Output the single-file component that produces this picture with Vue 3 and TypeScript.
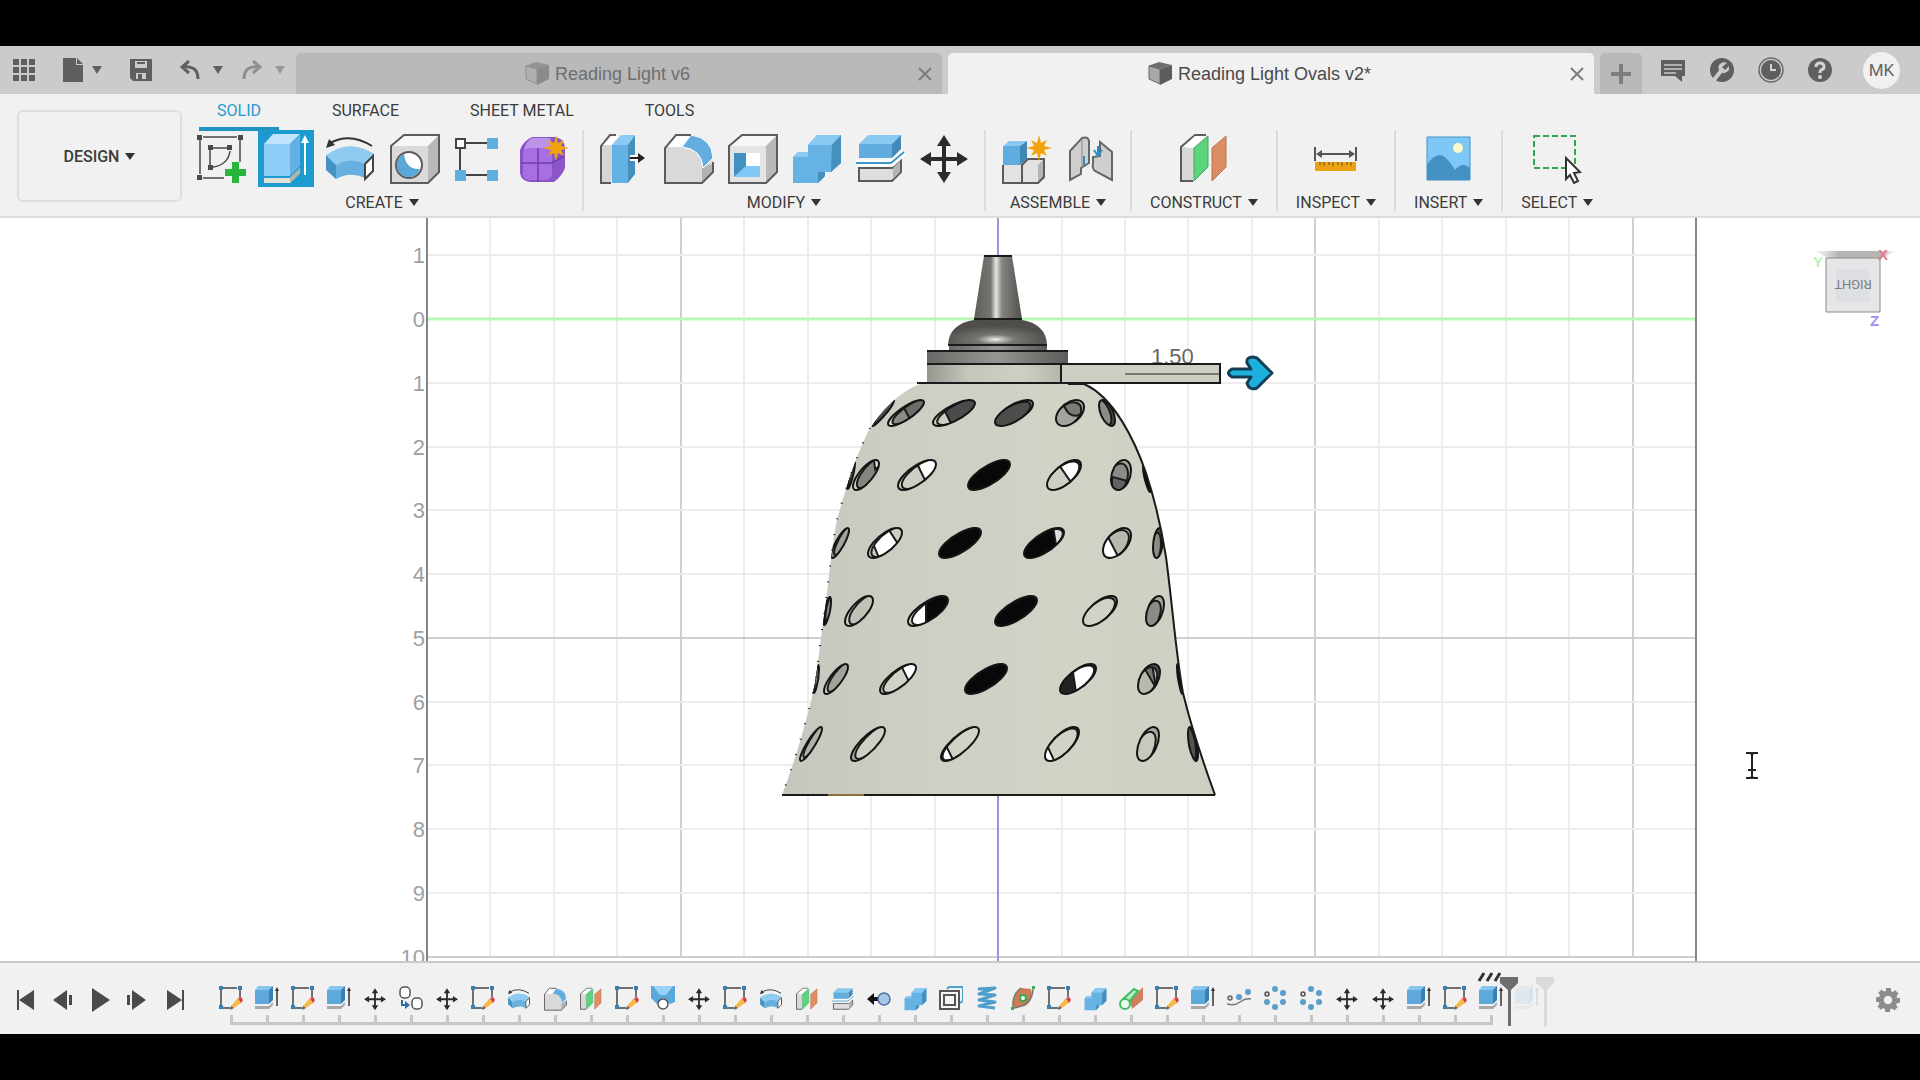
<script setup lang="ts">
interface Hole {
  cx: number
  cy: number
  w: number
  h: number
  rho: number
  rim: string
  fill: string
  off: number
  patch?: string
  patchFill?: string
}

interface Tool {
  icon: string
  name: string
  active?: boolean
}

interface ToolGroup {
  label: string
  tools: Tool[]
}

const ribbonTabs = ['SOLID', 'SURFACE', 'SHEET METAL', 'TOOLS']

const groups: ToolGroup[] = [
  {
    label: 'CREATE',
    tools: [
      { icon: 'sketch', name: 'Create Sketch' },
      { icon: 'extrude', name: 'Extrude', active: true },
      { icon: 'revolve', name: 'Revolve' },
      { icon: 'hole', name: 'Hole' },
      { icon: 'pattern', name: 'Rectangular Pattern' },
      { icon: 'form', name: 'Create Form' }
    ]
  },
  {
    label: 'MODIFY',
    tools: [
      { icon: 'press', name: 'Press Pull' },
      { icon: 'fillet', name: 'Fillet' },
      { icon: 'shell', name: 'Shell' },
      { icon: 'combine', name: 'Combine' },
      { icon: 'split', name: 'Split Body' },
      { icon: 'move', name: 'Move/Copy' }
    ]
  },
  {
    label: 'ASSEMBLE',
    tools: [
      { icon: 'component', name: 'New Component' },
      { icon: 'joint', name: 'Joint' }
    ]
  },
  { label: 'CONSTRUCT', tools: [{ icon: 'plane', name: 'Offset Plane' }] },
  { label: 'INSPECT', tools: [{ icon: 'measure', name: 'Measure' }] },
  { label: 'INSERT', tools: [{ icon: 'picture', name: 'Insert Canvas' }] },
  { label: 'SELECT', tools: [{ icon: 'select', name: 'Select' }] }
]

const playback = [
  { name: 'Go to start', d: 'M11 10h2v20h-2zM28 10v20l-15 -10z' },
  { name: 'Step back', d: 'M23 10v20l-14 -10zM25 15h3v10h-3z' },
  { name: 'Play', d: 'M10 8v24l18 -12z' },
  { name: 'Step forward', d: 'M12 10v20l14 -10zM7 15h3v10h-3z' },
  { name: 'Go to end', d: 'M24 10h2v20h-2zM9 10v20l15 -10z' }
]

const features: string[] = [
  't-sketch', 't-extrude', 't-sketch', 't-extrude', 'move', 't-copy', 'move', 't-sketch',
  'revolve', 'fillet', 'plane', 't-sketch', 't-loft', 'move', 't-sketch', 'revolve',
  'plane', 'split', 't-remove', 'combine', 't-offset', 't-coil', 't-patch', 't-sketch',
  'combine', 't-pipe', 't-sketch', 't-extrude', 't-path', 't-circular', 't-circular',
  'move', 'move', 't-extrude', 't-sketch', 't-extrude'
]

const LEFT = 427
const TOP = 319
const STEP_X = 63.45
const STEP_Y = 63.75

const columns = Array.from({ length: 19 }, (_, i) => i + 1).map((i) => ({
  x: Math.round(LEFT + i * STEP_X),
  major: i % 5 === 4
}))
const rows = Array.from({ length: 12 }, (_, i) => i - 1).map((i) => ({
  n: Math.abs(i),
  y: Math.round(TOP + i * STEP_Y),
  major: i === 5 || i === 10,
  zero: i === 0
}))

const BLACK = '#080808'
const DARK = '#4b4b4a'
const MID = '#8c8b86'
const PALE = '#cfcec5'
const RIM = '#a9a89f'
const WHITE = '#ffffff'

const hole = (
  cx: number, cy: number, w: number, h: number, rho: number,
  rim: string, fill: string, off: number, patch?: string, patchFill?: string
): Hole => ({ cx, cy, w, h, rho, rim, fill, off, patch, patchFill })

const holes: Hole[] = [
  hole(883, 413, 11, 13, 0.95, RIM, DARK, 0.2),
  hole(906, 413, 18, 13, 0.82, PALE, MID, 0.25, 'M-0.4 -1.2H1.2V1.2H0z', '#6c6b68'),
  hole(954, 413, 21, 13, 0.75, PALE, DARK, 0.2, 'M-1.2 -1.2H-0.7L-0.3 1.2H-1.2z', PALE),
  hole(1014, 413, 19, 13, 0.7, RIM, '#4e4d4c', -0.12),
  hole(1070, 413, 14, 13, 0.45, RIM, '#a3a29b', -0.2, 'M-0.3 -1.2H1.2V1.2L0.9 0.4Q0.1 0.4 -0.3 -1.2z', '#7b7a75'),
  hole(1107, 413, 8, 13, -0.55, DARK, MID, -0.45),

  hole(851, 475, 4, 14, 0.85, BLACK, DARK, 0.3),
  hole(866, 475, 13, 15, 0.75, PALE, '#85847e', 0.3, 'M0.3 -1.2H1.2V0.1H0.4z', '#dedddb'),
  hole(917, 475, 19, 15, 0.72, PALE, PALE, 0.2, 'M-0.2 -1.2H1.2V1.2H0.3z', WHITE),
  hole(989, 475, 21, 15, 0.72, BLACK, BLACK, 0),
  hole(1064, 475, 17, 15, 0.65, DARK, PALE, -0.1, 'M-0.2 -1.2H1.2V1.2H0.6z', WHITE),
  hole(1121, 475, 10, 15, 0.3, RIM, MID, -0.3, 'M-0.6 -0.3L0.8 0.4V1.2H-0.6z', '#62615e'),
  hole(1147, 478, 4, 14, -0.8, BLACK, BLACK, 0),

  hole(840, 543, 9, 15, 0.85, MID, '#a3a29b', 0.35),
  hole(885, 543, 17, 15, 0.7, PALE, PALE, 0.2, 'M-1 -1.2H0L0.7 1.2H-0.5z', WHITE),
  hole(960, 543, 21, 15, 0.72, BLACK, BLACK, 0),
  hole(1044, 543, 20, 15, 0.7, BLACK, BLACK, -0.06, 'M0.5 -1.2H1.2V1.2H0.7z', '#dedddb'),
  hole(1117, 543, 14, 15, 0.5, PALE, '#b9b8af', -0.15, 'M-1.2 -1.2H-0.6L0.3 1.2H-1.2z', WHITE),
  hole(1158, 543, 5, 15, 0.3, DARK, MID, -0.4),

  hole(827, 611, 4, 14, 0.7, BLACK, MID, 0.6),
  hole(859, 611, 14, 15, 0.7, PALE, '#c2c1b8', 0.3),
  hole(928, 611, 20, 15, 0.72, PALE, WHITE, 0.2, 'M-0.3 -1.2H1.2V1.2H-0.3z', BLACK),
  hole(1016, 611, 21, 15, 0.72, BLACK, BLACK, 0),
  hole(1100, 611, 17, 15, 0.65, RIM, '#d3d2c8', -0.12),
  hole(1155, 611, 9, 15, 0.45, RIM, MID, -0.35),

  hole(816, 679, 3, 14, 0.7, BLACK, MID, 0.5),
  hole(836, 679, 12, 15, 0.8, PALE, '#a3a29b', 0.3),
  hole(898, 679, 18, 15, 0.75, PALE, '#d3d2c8', 0.18, 'M0 -1.2H1.2V1.2H0.5z', WHITE),
  hole(986, 679, 21, 15, 0.72, BLACK, BLACK, 0),
  hole(1078, 679, 18, 15, 0.7, DARK, WHITE, -0.1, 'M-1.2 -1.2H-0.2L0 1.2H-1.2z', '#222222'),
  hole(1149, 679, 11, 15, 0.45, DARK, '#b9b8af', -0.25, 'M-0.2 -1.2H0.5L0.9 0.9z', '#777671'),
  hole(1180, 679, 3, 15, -0.8, BLACK, BLACK, 0),

  hole(811, 744, 11, 17, 0.9, PALE, '#b1b0a7', 0.3),
  hole(868, 744, 17, 17, 0.8, RIM, '#d0cfc5', 0.25),
  hole(960, 744, 19, 17, 0.78, DARK, '#d3d2c8', 0.08, 'M-1.2 -1.2H-0.9L-0.4 1.2H-1.2z', WHITE),
  hole(1062, 744, 17, 17, 0.7, DARK, '#d3d2c8', -0.08, 'M-1.2 -1.2H-0.9L-0.3 1.2H-1.2z', WHITE),
  hole(1148, 744, 11, 17, 0.5, RIM, '#c9c8be', -0.3),
  hole(1193, 744, 5, 17, -0.6, BLACK, '#55544f', -0.4)
]

// Maps the unit circle onto a slanted ellipse that fills a w by h half-extent box.
const holeMatrix = (h: Hole): string => {
  const s = Math.sqrt(1 - h.rho * h.rho)
  return `matrix(${h.w} ${(-h.h * h.rho).toFixed(3)} 0 ${(h.h * s).toFixed(3)} ${h.cx} ${h.cy})`
}

const wallShift = (h: Hole): string => `translate(${h.off} ${Math.abs(h.off) / 2})`

const BELL =
  'M920 384C900 391 880 412 868 432C855 458 842 500 836 524C830 560 828 590 823 623C819 650 818 666 815 683C808 718 793 767 782 795H1215C1203 762 1189 718 1183 693C1176 655 1173 610 1166 557C1160 520 1154 497 1146 473C1135 441 1114 397 1084 384Z'
const BELL_RIGHT = 'M1068 384H1084C1114 397 1135 441 1146 473C1154 497 1160 520 1166 557C1173 610 1176 655 1183 693C1189 718 1203 762 1215 795'
const BELL_LEFT = 'M870 428C855 458 842 500 836 524C830 560 828 590 823 623C819 650 818 666 815 683C808 718 793 767 782 795'
</script>

<template>
  <div class="screen">
    <svg class="sprite" aria-hidden="true">
      <defs>
        <path id="star" d="M0 -13L2 -5L8 -8L5 -2L13 0L5 2L8 8L2 5L0 13L-2 5L-8 8L-5 2L-13 0L-5 -2L-8 -8L-2 -5Z" fill="#f2a20c" />

        <symbol id="sketch" viewBox="0 0 56 57">
          <path d="M9 7H43M6 10V44M9 48H30M46 10V32M19 18H33M16 20V35M36 21Q34 35 19 37" fill="none" stroke="#4a4a4a" stroke-width="1.500" />
          <path d="M3 5h5v5h-5zM44 5h5v5h-5zM3 45h5v5h-5zM14 15h5v5h-5zM33 15h5v5h-5zM14 35h5v5h-5z" fill="#4a4a4a" />
          <path d="M38 32h7v7h7v7h-7v7h-7v-7h-7v-7h7z" fill="#27b53c" />
        </symbol>
        <symbol id="extrude" viewBox="0 0 56 57">
          <path d="M6 48H32L42 38V43L32 53H6Z" fill="#e3e0d5" />
          <path d="M32 48L42 38V43L32 53Z" fill="#b5b2a6" />
          <path d="M6 14L15 4H42L32 14Z" fill="#bfe4fb" />
          <path d="M6 14H32V46H6Z" fill="#8dcdf7" />
          <path d="M32 14L42 4V36L32 46Z" fill="#64b0e2" />
          <path d="M47 11V45" stroke="#fff" stroke-width="2" />
          <path d="M47 5L51 13H43Z" fill="#fff" />
        </symbol>
        <symbol id="revolve" viewBox="0 0 56 57">
          <path d="M8 13Q28 2 50 16" fill="none" stroke="#333" stroke-width="2" />
          <path d="M4 18L7 9L13 15Z" fill="#333" />
          <path d="M4 25Q28 8 52 24L43 34Q28 26 14 35Z" fill="#8fcbf1" />
          <path d="M14 35Q28 26 43 34V48Q28 41 14 49Z" fill="#68b0df" />
          <path d="M4 25L14 35V49L4 40Z" fill="#4694c6" />
          <path d="M43 34L51 26V41L43 49Z" fill="#fff" stroke="#444" stroke-width="2" />
        </symbol>
        <symbol id="hole" viewBox="0 0 56 57">
          <path d="M5 16L18 5H53L42 16Z" fill="#f6f6f6" />
          <path d="M42 16L53 5V42L42 53Z" fill="#b9b9b9" />
          <path d="M5 16H42V53H5Z" fill="#dadada" />
          <path d="M5 16L18 5H53V42L42 53H5Z" fill="none" stroke="#5b5b5b" stroke-width="2" />
          <circle cx="23" cy="35" r="13" fill="#fff" stroke="#5b5b5b" stroke-width="2" />
          <path d="M18 24A12 12 0 1 0 34 39Q20 40 18 24Z" fill="#5ba8d8" />
        </symbol>
        <symbol id="pattern" viewBox="0 0 56 57">
          <path d="M16 13H37M16 45H37M10 19V40" stroke="#444" stroke-width="2" />
          <path d="M6 9h9v9h-9z" fill="#fff" stroke="#444" stroke-width="2" />
          <path d="M37 8h11v11h-11zM5 40h11v11h-11zM37 40h11v11h-11z" fill="#5faee0" />
        </symbol>
        <symbol id="form" viewBox="0 0 56 57">
          <path d="M18 7H40Q51 8 51 20V38Q48 46 40 52H16Q7 51 6 43V20Q9 11 18 7Z" fill="#8a55c9" />
          <path d="M18 8H36L40 20H10Q12 11 18 8Z" fill="#bb93e8" />
          <rect x="9" y="18" width="29" height="32" rx="6" fill="#a86fe3" />
          <path d="M24 18V52M7 33H38L50 26" fill="none" stroke="#6f3db0" stroke-width="1.500" />
          <use href="#star" x="42" y="18" />
        </symbol>
        <symbol id="press" viewBox="0 0 56 57">
          <path d="M15 53H5V16L14 5H20" fill="#d6d6d6" stroke="#5b5b5b" stroke-width="2" />
          <path d="M7 15L15 6H22L16 15Z" fill="#fff" />
          <path d="M16 15H32V53H16Z" fill="#64b2e4" />
          <path d="M16 15L25 5H39L32 15Z" fill="#8bcbf3" />
          <path d="M32 15L39 5V44L32 53Z" fill="#458fbd" />
          <path d="M34 28H44" stroke="#fff" stroke-width="6" />
          <path d="M34 28H44" stroke="#222" stroke-width="2" />
          <path d="M42 23L49 28L42 33Z" fill="#222" />
        </symbol>
        <symbol id="fillet" viewBox="0 0 56 57">
          <path d="M5 53V18L16 5H31Q50 8 53 32V42L42 53Z" fill="#d9d9d9" />
          <path d="M6 17L16 6H31L22 17Z" fill="#fff" />
          <path d="M42 38L52 34V42L42 52Z" fill="#b2b2b2" />
          <path d="M22 17L31 5Q52 8 53 28L43 38Q42 19 22 17Z" fill="#63ade0" stroke="#fff" />
          <path d="M31 5H16L5 18V53H42L53 42V32" fill="none" stroke="#5b5b5b" stroke-width="2" />
        </symbol>
        <symbol id="shell" viewBox="0 0 56 57">
          <path d="M5 16L18 5H53L42 16Z" fill="#f6f6f6" />
          <path d="M42 16L53 5V42L42 53Z" fill="#b9b9b9" />
          <path d="M5 16H42V53H5Z" fill="#e4e4e4" />
          <path d="M5 16L18 5H53V42L42 53H5Z" fill="none" stroke="#5b5b5b" stroke-width="2" />
          <path d="M10 23H36V47H10Z" fill="#fff" />
          <path d="M10 23H22V37L10 47Z" fill="#4391c0" />
          <path d="M10 47L22 36H36V47Z" fill="#81c8f5" />
        </symbol>
        <symbol id="combine" viewBox="0 0 56 57">
          <path d="M5 27L10 22H20V15L29 5H53V33L43 42H37V46L30 53H5Z" fill="#66b2e3" />
          <path d="M20 15L29 5H53L44 15Z" fill="#8acaf2" />
          <path d="M5 27L10 22H20V27Z" fill="#8acaf2" />
          <path d="M44 15L53 5V33L43 42ZM37 42V46L30 53V42Z" fill="#468fbe" />
        </symbol>
        <symbol id="split" viewBox="0 0 56 57">
          <path d="M7 14L16 5H49L40 14Z" fill="#8acaf2" />
          <path d="M7 14H40V28H7Z" fill="#62ade0" />
          <path d="M40 14L49 5V19L40 28Z" fill="#438ab9" />
          <path d="M7 38H40L49 30V42L40 51H7Z" fill="#dedede" stroke="#5b5b5b" stroke-width="2" />
          <path d="M41 38L48 31V42L41 49Z" fill="#b3b3b3" />
          <path d="M4 33H40L52 22" fill="none" stroke="#fff" stroke-width="7" />
          <path d="M4 33H39L52 22" fill="none" stroke="#3e97ca" stroke-width="2" />
        </symbol>
        <symbol id="move" viewBox="0 0 56 57">
          <path d="M28 11V47M10 29H46" stroke="#2b2b2b" stroke-width="4" />
          <path d="M28 5L35 16H21ZM28 53L35 42H21ZM4 29L15 22V36ZM52 29L41 22V36Z" fill="#2b2b2b" />
        </symbol>
        <symbol id="component" viewBox="0 0 56 57">
          <path d="M5 35H24V53H5ZM24 35L30 29H46L40 35ZM24 35H40V53H24Z" fill="#e2e2e2" />
          <path d="M40 35L46 29V47L40 53Z" fill="#b5b5b5" />
          <path d="M5 35V53H40L46 47V29H30L24 35V53" fill="none" stroke="#5b5b5b" stroke-width="2" />
          <path d="M5 16H22V35H5Z" fill="#5fade0" />
          <path d="M5 16L11 11H29L22 16Z" fill="#8acaf2" />
          <path d="M22 16L29 11V29L22 35Z" fill="#3f87b5" />
          <use href="#star" x="41" y="18" />
        </symbol>
        <symbol id="joint" viewBox="0 0 56 57">
          <path d="M8 21L20 8Q26 6 27 11V33L19 38V44L8 50Z" fill="#cfcfcf" stroke="#666" stroke-width="2" />
          <path d="M20 9V38" stroke="#888" />
          <path d="M38 12L50 22V50L33 41Q30 39 31 33V27L38 26Z" fill="#cfcfcf" stroke="#666" stroke-width="2" />
          <path d="M22 35V26M36 16V25M32 20L36 26L40 20" fill="none" stroke="#2f8fc4" stroke-width="2" />
        </symbol>
        <symbol id="plane" viewBox="0 0 56 57">
          <path d="M17 51H5V17L19 5H30" fill="#d8d8d8" stroke="#5b5b5b" stroke-width="2" />
          <path d="M7 17L19 6H30L18 18Z" fill="#fff" />
          <path d="M18 18L32 6V37L18 51Z" fill="#5bd47c" stroke="#43a960" />
          <path d="M36 18L50 6V37L36 51Z" fill="#dd8d62" stroke="#b97350" />
        </symbol>
        <symbol id="measure" viewBox="0 0 56 57">
          <path d="M7 17V31M48 17V31" stroke="#555" stroke-width="2" />
          <path d="M11 24H44" stroke="#555" stroke-width="2" />
          <path d="M8 24L14 20V28ZM47 24L41 20V28Z" fill="#555" />
          <path d="M7 32H48V41H7Z" fill="#eda211" />
          <path d="M12 32V35M16 32V36M21 32V35M25 32V36M30 32V35M34 32V36M39 32V35M43 32V36" stroke="#6b4d13" />
        </symbol>
        <symbol id="picture" viewBox="0 0 56 57">
          <path d="M6 7H49V50H6Z" fill="#7ec8f8" />
          <circle cx="37" cy="18" r="5" fill="#fdf9cb" />
          <path d="M6 35Q12 25 19 25Q26 26 34 40Q41 31 49 38V50H6Z" fill="#4492c5" />
          <path d="M6 7H49V50H6Z" fill="none" stroke="#4492c5" />
        </symbol>
        <symbol id="select" viewBox="0 0 56 57">
          <path d="M5 6H46V38H5Z" fill="none" stroke="#32a650" stroke-width="2" stroke-dasharray="6 3" />
          <path d="M37 28L51 42L45 43L49 51L45 53L41 45L37 49Z" fill="#fff" stroke="#333" stroke-width="2" />
        </symbol>

        <symbol id="t-sketch" viewBox="0 0 24 24">
          <path d="M4 2H18M2 4V20M4 22H11M21 4V11" fill="none" stroke="#444" stroke-width="1.500" />
          <path d="M0 0h4v4h-4zM19 0h4v4h-4zM0 19h4v4h-4z" fill="#3a7fb0" />
          <path d="M12 20L19 12L23 16L15 22Z" fill="#f6b847" />
          <path d="M19 12L22 11L24 14L22 17Z" fill="#dd3947" />
          <path d="M12 20L11 24L15 22Z" fill="#555" />
        </symbol>
        <symbol id="t-extrude" viewBox="0 0 24 24">
          <path d="M0 20H14L18 16V19L14 23H0Z" fill="#a9a9a9" />
          <path d="M0 4L3 0H18L15 4Z" fill="#86c5ee" />
          <path d="M0 4H14V18H0Z" fill="#5ea9dc" />
          <path d="M14 4L18 0V14L14 18Z" fill="#3c7fae" />
          <path d="M22 4V20" stroke="#333" stroke-width="1.500" />
          <path d="M22 1L24 5H20Z" fill="#333" />
        </symbol>
        <symbol id="t-copy" viewBox="0 0 24 24">
          <rect x="1" y="1" width="10" height="11" rx="4" fill="#fff" stroke="#555" stroke-width="1.500" />
          <rect x="13" y="12" width="10" height="11" rx="4" fill="#fff" stroke="#555" stroke-width="1.500" />
          <path d="M3 14V19H7" fill="none" stroke="#2c6ea6" stroke-width="2" />
          <path d="M6 15L11 19L6 23Z" fill="#2c6ea6" />
        </symbol>
        <symbol id="t-loft" viewBox="0 0 24 24">
          <path d="M0 0H24V16L19 18L12 12L6 18L0 12Z" fill="#5ba9db" />
          <path d="M2 0H22L15 9H9Z" fill="#98d3f7" />
          <circle cx="12" cy="18" r="5" fill="#fff" stroke="#555" stroke-width="1.500" />
        </symbol>
        <symbol id="t-remove" viewBox="0 0 24 24">
          <path d="M0 13L7 7V11H12V15H7V19Z" fill="#111" />
          <circle cx="17" cy="13" r="6" fill="#a5c6e6" stroke="#4f6f9e" stroke-width="1.500" />
        </symbol>
        <symbol id="t-offset" viewBox="0 0 24 24">
          <path d="M8 3L10 1H24V15L21 17" fill="none" stroke="#4f9fc8" stroke-width="2" />
          <path d="M1 5H20V23H1Z" fill="#f5f5f5" stroke="#555" stroke-width="2" />
          <path d="M5 9H16V19H5Z" fill="none" stroke="#555" stroke-width="2" />
        </symbol>
        <symbol id="t-coil" viewBox="0 0 24 24">
          <path d="M3 3L20 2L4 8L20 9L4 14L20 16L4 20L20 22" fill="none" stroke="#4f9dcb" stroke-width="3" stroke-linejoin="round" />
        </symbol>
        <symbol id="t-patch" viewBox="0 0 24 24">
          <path d="M2 22Q1 8 10 2L20 3Q23 14 14 20Z" fill="#cc7c55" />
          <path d="M2 22Q1 8 10 2M2 22Q22 20 22 2" fill="none" stroke="#777" stroke-width="1.500" />
          <circle cx="12" cy="12" r="3" fill="#fff" stroke="#35a94e" stroke-width="2" />
          <path d="M0 21h3v3h-3zM21 0h3v3h-3z" fill="#31b64a" />
        </symbol>
        <symbol id="t-pipe" viewBox="0 0 24 24">
          <path d="M11 14L24 1V14L13 23Z" fill="#ce805c" />
          <path d="M3 14L15 3L19 5L10 16" fill="#bfe8c8" stroke="#3fbf62" stroke-width="2" />
          <circle cx="6" cy="18" r="5" fill="#eefaf0" stroke="#3fbf62" stroke-width="2" />
        </symbol>
        <symbol id="t-path" viewBox="0 0 24 24">
          <circle cx="3" cy="12" r="2" fill="#ddd" stroke="#666" stroke-width="1.500" />
          <circle cx="12" cy="11" r="3" fill="#5a9ecb" />
          <circle cx="21" cy="6" r="3" fill="#5a9ecb" />
          <path d="M0 18Q8 20 13 16T24 13" fill="none" stroke="#777" stroke-width="1.500" />
        </symbol>
        <symbol id="t-circular" viewBox="0 0 24 24">
          <circle cx="4" cy="8" r="2" fill="#ddd" stroke="#555" stroke-width="1.500" />
          <g fill="#5a9ecb">
            <circle cx="12" cy="3" r="3" /><circle cx="20" cy="7" r="3" /><circle cx="20" cy="16" r="3" />
            <circle cx="12" cy="21" r="3" /><circle cx="4" cy="16" r="3" />
          </g>
        </symbol>
        <symbol id="cube" viewBox="0 0 24 24">
          <path d="M0 4L11 0L24 3L12 7Z" fill="#6f6f6f" />
          <path d="M1 4L12 7V22L1 17Z" fill="#a9a9a9" stroke="#666" />
          <path d="M12 7L24 3V17L12 23Z" fill="#5c5c5c" />
        </symbol>
      </defs>
    </svg>

    <header class="titlebar">
      <div class="quick">
        <button class="qa" aria-label="Data panel">
          <svg width="22" height="22" viewBox="0 0 22 22"><path d="M0 0h6v6h-6zM8 0h6v6h-6zM16 0h6v6h-6zM0 8h6v6h-6zM8 8h6v6h-6zM16 8h6v6h-6zM0 16h6v6h-6zM8 16h6v6h-6zM16 16h6v6h-6z" fill="#5f5f5f" /></svg>
        </button>
        <button class="qa" aria-label="File">
          <svg width="20" height="24" viewBox="0 0 20 24"><path d="M0 0H13V7H20V24H0ZM14 0L20 6H14Z" fill="#5f5f5f" /></svg>
          <span class="caret"></span>
        </button>
        <button class="qa" aria-label="Save">
          <svg width="22" height="22" viewBox="0 0 22 22"><path d="M0 0H22V22H3L0 19Z" fill="#5f5f5f" /><path d="M5 2H17V9H5ZM6 14H16V20H6Z" fill="#cbcbcb" /><path d="M7 3H15V5H7ZM8 15H12V20H8Z" fill="#5f5f5f" /></svg>
        </button>
        <button class="qa undo-btn" aria-label="Undo">
          <svg width="20" height="20" viewBox="0 0 20 20"><path d="M9 1L2 7L9 13M3 7Q18 5 18 19" fill="none" stroke="#5f5f5f" stroke-width="3" /></svg>
          <span class="caret"></span>
        </button>
        <button class="qa redo-btn" aria-label="Redo">
          <svg width="20" height="20" viewBox="0 0 20 20"><path d="M11 1L18 7L11 13M17 7Q2 5 2 19" fill="none" stroke="#8f8f8f" stroke-width="3" /></svg>
          <span class="caret pale"></span>
        </button>
      </div>

      <div class="doc-tab idle">
        <button class="doc-name"><svg class="cube"><use href="#cube" /></svg>Reading Light v6</button>
        <button class="close" aria-label="Close Reading Light v6">
          <svg width="14" height="14" viewBox="0 0 14 14"><path d="M1 1L13 13M13 1L1 13" stroke="#7c7c7c" stroke-width="2" /></svg>
        </button>
      </div>
      <div class="doc-tab current">
        <button class="doc-name"><svg class="cube"><use href="#cube" /></svg>Reading Light Ovals v2*</button>
        <button class="close" aria-label="Close Reading Light Ovals v2">
          <svg width="14" height="14" viewBox="0 0 14 14"><path d="M1 1L13 13M13 1L1 13" stroke="#7c7c7c" stroke-width="2" /></svg>
        </button>
      </div>
      <button class="new-tab" aria-label="New design">
        <svg width="20" height="20" viewBox="0 0 20 20"><path d="M10 0V20M0 10H20" stroke="#7d7d7d" stroke-width="4" /></svg>
      </button>

      <div class="account">
        <button class="qa" aria-label="Notifications">
          <svg width="26" height="26" viewBox="0 0 26 26"><path d="M1 3H25V19H22V25L15 19H1Z" fill="#5f5f5f" /><path d="M4 8H22M4 12H22M4 16H16" stroke="#cbcbcb" stroke-width="1.500" /></svg>
        </button>
        <button class="qa" aria-label="Extensions">
          <svg width="26" height="26" viewBox="0 0 26 26"><circle cx="13" cy="13" r="12" fill="#5f5f5f" /><path d="M4 24L12 14" stroke="#cbcbcb" stroke-width="4" /><path d="M18 6Q13 4 10 8Q8 12 12 15Q16 18 20 13L20 9L16 13L13 10Z" fill="#cbcbcb" /></svg>
        </button>
        <button class="qa" aria-label="Job status">
          <svg width="26" height="26" viewBox="0 0 26 26"><circle cx="13" cy="13" r="12" fill="none" stroke="#6a6a6a" stroke-width="1.500" /><circle cx="13" cy="13" r="10" fill="#5f5f5f" /><path d="M13 7V13H18" fill="none" stroke="#d5d5d5" stroke-width="2" /></svg>
        </button>
        <button class="qa" aria-label="Help">
          <svg width="26" height="26" viewBox="0 0 26 26"><circle cx="13" cy="13" r="12" fill="#5f5f5f" /><path d="M9 10Q9 6 13 6Q17 6 17 10Q17 12 14 13Q13 14 13 16" fill="none" stroke="#d5d5d5" stroke-width="3" /><circle cx="13" cy="20" r="2" fill="#d5d5d5" /></svg>
        </button>
        <button class="avatar">MK</button>
      </div>
    </header>

    <section class="ribbon">
      <button class="workspace">DESIGN<span class="caret small"></span></button>
      <div class="ribbon-main">
        <nav class="ribbon-tabs">
          <button v-for="(tab, i) in ribbonTabs" :key="tab" :class="['ribbon-tab', { on: i === 0 }]">{{ tab }}</button>
        </nav>
        <div class="groups">
          <div v-for="g in groups" :key="g.label" :class="['group', { multi: g.tools.length > 1 }]">
            <div class="tools">
              <button v-for="t in g.tools" :key="t.name" :class="['tool', { active: t.active }]" :aria-label="t.name">
                <svg width="56" height="57"><use :href="'#' + t.icon" /></svg>
              </button>
            </div>
            <button class="group-label">{{ g.label }}<span class="caret small"></span></button>
          </div>
        </div>
      </div>
    </section>

    <main class="viewport">
      <svg class="scene" viewBox="0 218 1920 743" preserveAspectRatio="xMidYMin slice">
        <defs>
          <linearGradient id="bell" x1="0" x2="1" y1="0" y2="0">
            <stop offset="0" stop-color="#c7c6be" />
            <stop offset="0.3" stop-color="#cfcec4" />
            <stop offset="0.65" stop-color="#d3d2c7" />
            <stop offset="1" stop-color="#cfcec3" />
          </linearGradient>
          <linearGradient id="cone" x1="0" x2="1" y1="0" y2="0">
            <stop offset="0" stop-color="#5d5c59" />
            <stop offset="0.35" stop-color="#777672" />
            <stop offset="0.46" stop-color="#e6e6e4" />
            <stop offset="0.58" stop-color="#858480" />
            <stop offset="1" stop-color="#50504d" />
          </linearGradient>
          <linearGradient id="flange" x1="0" x2="1" y1="0" y2="0">
            <stop offset="0" stop-color="#6a6967" />
            <stop offset="0.5" stop-color="#979693" />
            <stop offset="1" stop-color="#5c5b59" />
          </linearGradient>
          <linearGradient id="ring" x1="0" x2="1" y1="0" y2="0">
            <stop offset="0" stop-color="#96958e" />
            <stop offset="0.3" stop-color="#c6c5bc" />
            <stop offset="0.7" stop-color="#d0cfc5" />
            <stop offset="1" stop-color="#b7b6ad" />
          </linearGradient>
          <radialGradient id="dome" cx="0.48" cy="0.78" r="0.55">
            <stop offset="0" stop-color="#f4f4f4" />
            <stop offset="0.12" stop-color="#c2c2c0" />
            <stop offset="0.35" stop-color="#777673" />
            <stop offset="1" stop-color="#4f4e4b" />
          </radialGradient>
          <linearGradient id="cube-shade" x1="0" x2="1" y1="0" y2="0">
            <stop offset="0" stop-color="#fff" />
            <stop offset="0.3" stop-color="#b5b5b5" />
            <stop offset="0.8" stop-color="#b5b5b5" />
            <stop offset="1" stop-color="#fff" />
          </linearGradient>
          <clipPath id="bell-clip"><path :d="BELL" /></clipPath>
          <clipPath id="unit"><circle r="1" /></clipPath>
        </defs>

        <g class="grid-lines">
          <line v-for="c in columns" :key="'c' + c.x" :x1="c.x" :x2="c.x" y1="218" y2="957" :class="{ major: c.major }" />
          <line v-for="r in rows" :key="'r' + r.y" :x1="427" x2="1696" :y1="r.y" :y2="r.y" :class="{ major: r.major, zero: r.zero }" />
          <line class="edge" x1="427" x2="427" y1="218" y2="961" />
          <line class="edge" x1="1696" x2="1696" y1="218" y2="961" />
          <line class="axis" x1="998" x2="998" y1="218" y2="961" />
        </g>
        <text v-for="r in rows" :key="'t' + r.y" class="ruler" x="425" :y="r.y + 8">{{ r.n }}</text>

        <text class="dimension" x="1151" y="364">1.50</text>

        <path :d="BELL" fill="url(#bell)" />
        <g clip-path="url(#bell-clip)">
          <g v-for="(h, i) in holes" :key="i" :transform="holeMatrix(h)">
            <g clip-path="url(#unit)">
              <circle r="1" :fill="h.rim" />
              <g :transform="wallShift(h)">
                <circle r="1" :fill="h.fill" />
                <g v-if="h.patch" clip-path="url(#unit)">
                  <path class="wall" :d="h.patch" :fill="h.patchFill" />
                </g>
                <circle class="wall" r="1" fill="none" />
              </g>
            </g>
            <circle class="rim" r="1" />
          </g>
        </g>
        <path :d="BELL_RIGHT" class="outline" />
        <path :d="BELL_LEFT" class="outline faint" />
        <path d="M782 795H1215" class="outline" />
        <path d="M828 795H864" stroke="#8d6d35" stroke-width="2" />

        <path d="M984 256H1012L1022 319H974Z" fill="url(#cone)" />
        <path d="M984 256H1012M974 319H1022" class="outline" />
        <path d="M974 320H1022Q1046 324 1047 345H948Q949 324 974 320Z" fill="url(#dome)" />
        <path d="M949 345H1047V351H949Z" fill="url(#flange)" />
        <path d="M948 345H1047" class="outline" />
        <path d="M927 351H1068V364H927Z" fill="url(#flange)" />
        <path d="M927 364H1061V383H927Z" fill="url(#ring)" />
        <path d="M1061 364H1220V383H1061Z" fill="#cfcec4" />
        <path d="M1125 374H1220" stroke="#77766f" stroke-width="2" />
        <path d="M927 351H1068M927 364H1220V383H917M1061 364V383" class="outline" />

        <path d="M1232 369H1251L1247 363Q1246 357 1253 357L1257 358L1272 373L1257 388Q1249 391 1247 383L1251 377H1232Q1225 373 1232 369Z" fill="#1cb1dd" stroke="#143e55" stroke-width="3" stroke-linejoin="round" />

        <g>
          <path d="M1814 251H1896L1882 258H1828Z" fill="url(#cube-shade)" />
          <path d="M1826 258H1880V312H1826Z" fill="#e6e6e8" stroke="#8b8b8b" />
          <path d="M1836 269H1870V302H1836Z" fill="#dedfe4" />
          <text class="face" transform="rotate(180 1853 285)" x="1853" y="290">RIGHT</text>
          <text class="ax x" x="1878" y="260">X</text>
          <text class="ax y" x="1813" y="267">Y</text>
          <text class="ax z" x="1870" y="326">Z</text>
        </g>

        <path d="M1746 753H1751L1752 755L1753 753H1758M1752 755V776M1746 778H1751L1752 776L1753 778H1758M1748 770H1756" fill="none" stroke="#222" stroke-width="2" />
      </svg>
    </main>

    <footer class="timeline">
      <div class="playback">
        <button v-for="p in playback" :key="p.name" :aria-label="p.name">
          <svg width="38" height="39" viewBox="0 0 38 39"><path :d="p.d" fill="#4a4a4a" /></svg>
        </button>
      </div>
      <div class="features">
        <button v-for="(f, i) in features" :key="i" class="feature" :aria-label="'Feature ' + (i + 1)">
          <svg v-if="f.startsWith('t-')" width="24" height="24"><use :href="'#' + f" /></svg>
          <svg v-else width="26" height="26"><use :href="'#' + f" /></svg>
        </button>
        <button class="feature pending" aria-label="Rolled back feature">
          <svg width="24" height="24"><use href="#t-extrude" /></svg>
        </button>
        <svg class="marks" width="72" height="56" viewBox="7 0 72 56">
          <path d="M-5 10L0 2M3 10L8 2M11 10L16 2" stroke="#333" stroke-width="3" />
          <path d="M16 6H34V12L27 19V55H24V19L16 12Z" fill="#6e6e6e" />
          <path d="M52 6H70V12L63 19V55H60V19L52 12Z" fill="#dadada" />
        </svg>
      </div>
      <button class="gear" aria-label="Timeline settings">
        <svg width="24" height="24" viewBox="-12 -12 24 24">
          <g fill="#8c8c8c">
            <rect v-for="n in 8" :key="n" x="-2" y="-12" width="5" height="8" :transform="`rotate(${n * 45})`" />
          </g>
          <circle r="7" fill="none" stroke="#8c8c8c" stroke-width="5" />
        </svg>
      </button>
    </footer>
  </div>
</template>

<style>
body {
  margin: 0;
  background: #000;
}
</style>

<style scoped>
.screen {
  box-sizing: border-box;
  min-height: 100vh;
  padding: 46px 0;
  display: flex;
  flex-direction: column;
  background: #000;
  font-family: Roboto, "Liberation Sans", sans-serif;
  color: #3b3b3b;
}
button {
  appearance: none;
  border: 0;
  padding: 0;
  margin: 0;
  background: none;
  font: inherit;
  color: inherit;
}
svg {
  display: block;
  flex: none;
}
.sprite {
  position: absolute;
  width: 0;
  height: 0;
}
.caret {
  border: 5px solid transparent;
  border-top: 8px solid #5f5f5f;
  border-bottom: 0;
}
.caret.pale {
  border-top-color: #999;
}
.caret.small {
  border-width: 7px 5px 0;
  border-top-color: #333;
}

.titlebar {
  height: 48px;
  display: flex;
  align-items: flex-end;
  gap: 6px;
  background: #cbcbcb;
}
.quick {
  box-sizing: border-box;
  width: 290px;
  height: 48px;
  padding-left: 13px;
  display: flex;
  align-items: center;
  gap: 28px;
}
.qa {
  display: flex;
  align-items: center;
  gap: 9px;
}
.undo-btn {
  gap: 13px;
}
.redo-btn {
  gap: 13px;
  margin-left: -9px;
}
.doc-tab {
  flex: 1;
  box-sizing: border-box;
  height: 41px;
  padding: 0 6px 0 5px;
  display: flex;
  align-items: center;
  border-radius: 5px 5px 0 0;
  font: 18px/24px "Liberation Sans", Arial, sans-serif;
}
.doc-tab.idle {
  background: #b9b9b9;
  color: #6e6e6e;
}
.doc-tab.idle .cube {
  opacity: 0.5;
}
.doc-tab.current {
  background: #f1f1f1;
  color: #4a4a4a;
}
.doc-name {
  flex: 1;
  display: flex;
  align-items: center;
  justify-content: center;
  gap: 6px;
}
.cube {
  width: 24px;
  height: 24px;
}
.close {
  width: 22px;
  height: 22px;
  display: flex;
  align-items: center;
  justify-content: center;
}
.new-tab {
  width: 42px;
  height: 41px;
  display: flex;
  align-items: center;
  justify-content: center;
  border-radius: 5px 5px 0 0;
  background: #b9b9b9;
}
.account {
  box-sizing: border-box;
  width: 272px;
  height: 48px;
  padding-left: 12px;
  display: flex;
  align-items: center;
  gap: 24px;
}
.account .qa {
  width: 25px;
}
.account svg {
  margin: 0;
}
.avatar {
  width: 37px;
  height: 37px;
  margin-left: 7px;
  border-radius: 50%;
  background: #f0f0f0;
  font-size: 17px;
  color: #666;
}

.ribbon {
  box-sizing: border-box;
  height: 124px;
  display: flex;
  background: #f1f1f1;
  border-bottom: 2px solid #dcdcdc;
}
.workspace {
  box-sizing: border-box;
  width: 165px;
  height: 92px;
  margin: 16px 0 0 17px;
  display: flex;
  align-items: center;
  justify-content: center;
  gap: 6px;
  border: 2px solid #dedede;
  border-radius: 6px;
  font-size: 16px;
  font-weight: 500;
}
.ribbon-main {
  flex: 1;
}
.ribbon-tabs {
  display: flex;
  gap: 35px;
  height: 36px;
  padding-left: 17px;
}
.ribbon-tab {
  box-sizing: border-box;
  height: 37px;
  padding: 0 18px;
  border-bottom: 4px solid transparent;
  font-size: 16px;
  line-height: 34px;
}
.ribbon-tab.on {
  color: #1f9bd0;
  border-bottom-color: #1f93c4;
}
.groups {
  display: flex;
}
.group {
  padding: 0 18px;
  display: flex;
  flex-direction: column;
  align-items: center;
  border-right: 2px solid #dcdcdc;
  height: 81px;
}
.group:last-child {
  border-right: 0;
}
.group.multi {
  padding: 0 12px;
}
.tools {
  display: flex;
  gap: 8px;
}
.tool {
  width: 56px;
  height: 57px;
}
.tool.active {
  background: #1d9bd1;
}
.group-label {
  display: flex;
  align-items: center;
  gap: 6px;
  font-size: 16px;
  line-height: 32px;
}
.group-label .caret {
  margin-bottom: 2px;
}

.viewport {
  flex: 1;
  min-height: 400px;
  display: flex;
  background: #fff;
  overflow: hidden;
}
.scene {
  flex: 1;
  width: 100%;
  height: 743px;
}
.grid-lines line {
  stroke: #ededed;
  stroke-width: 2;
}
.grid-lines .major {
  stroke: #cfcfcf;
}
.grid-lines .zero {
  stroke: #b9f8b4;
  stroke-width: 3;
}
.grid-lines .edge {
  stroke: #858585;
}
.grid-lines .axis {
  stroke: #9a93dd;
}
.ruler {
  font: 22px "Liberation Sans", Arial, sans-serif;
  fill: #a0a0a0;
  text-anchor: end;
}
.dimension {
  font: 22px "Liberation Sans", Arial, sans-serif;
  fill: #666;
}
.outline {
  fill: none;
  stroke: #1a1a1a;
  stroke-width: 2;
}
.outline.faint {
  stroke-dasharray: 1 15;
}
.wall {
  stroke: #1a1a1a;
  stroke-width: 2;
  vector-effect: non-scaling-stroke;
}
.rim {
  fill: none;
  stroke: #141414;
  stroke-width: 2;
  vector-effect: non-scaling-stroke;
}
.face {
  font: 13px Roboto, sans-serif;
  fill: #7d7f84;
  text-anchor: middle;
}
.ax {
  font: bold 15px "Liberation Sans", Arial, sans-serif;
}
.ax.x {
  fill: #e8798a;
}
.ax.y {
  fill: #b4f5ae;
}
.ax.z {
  fill: #9a93f0;
}

.timeline {
  box-sizing: border-box;
  height: 73px;
  display: flex;
  justify-content: flex-start;
  background: #f1f1f1;
  border-top: 2px solid #c9c9c9;
}
.playback {
  display: flex;
  padding: 17px 0 0 6px;
}
.playback button {
  width: 38px;
  height: 39px;
}
.features {
  position: relative;
  display: flex;
  padding: 17px 0 0 17px;
}
.feature {
  position: relative;
  width: 36px;
  height: 45px;
  padding-top: 6px;
  display: flex;
  justify-content: center;
  align-items: flex-start;
  box-sizing: border-box;
}
.feature::before {
  content: "";
  position: absolute;
  left: 17px;
  bottom: 0;
  width: 3px;
  height: 10px;
  background: #c6c6c6;
}
.feature::after {
  content: "";
  position: absolute;
  left: 17px;
  right: -17px;
  bottom: 0;
  height: 3px;
  background: #c6c6c6;
}
.feature:nth-last-child(-n + 3)::after {
  right: 16px;
}
.feature.pending::before,
.feature.pending::after {
  opacity: 0;
}
.pending svg {
  opacity: 0.12;
}
.marks {
  position: absolute;
  right: -18px;
  top: 8px;
  overflow: visible;
}
.gear {
  align-self: center;
  margin: 2px 20px 0 auto;
}
</style>
